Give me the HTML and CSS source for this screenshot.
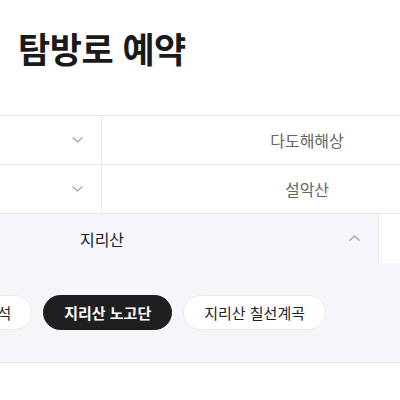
FILE: index.html
```html
<!DOCTYPE html>
<html lang="ko">
<head>
  <meta charset="UTF-8">
  <title>탐방로 예약</title>
  <link rel="stylesheet" href="styles.css">
</head>
<body>
  <h1 class="title">탐방로 예약</h1>

  <div class="board">
    <div class="row">
      <div class="cell cell-half">
        <svg class="chevron" width="11" height="6" viewBox="0 0 11 6"><path d="M0.5 0.5 L5.5 5 L10.5 0.5" /></svg>
      </div>
      <div class="cell cell-wide">
        <span class="cell-name">다도해해상</span>
      </div>
    </div>

    <div class="row">
      <div class="cell cell-half">
        <svg class="chevron" width="11" height="6" viewBox="0 0 11 6"><path d="M0.5 0.5 L5.5 5 L10.5 0.5" /></svg>
      </div>
      <div class="cell cell-wide">
        <span class="cell-name">설악산</span>
      </div>
    </div>

    <div class="row row-open">
      <div class="cell cell-open">
        <span class="cell-name">지리산</span>
        <svg class="chevron" width="11" height="6" viewBox="0 0 11 6"><path d="M0.5 5.5 L5.5 1 L10.5 5.5" /></svg>
      </div>
      <div class="cell cell-blank"></div>
    </div>

    <div class="panel">
      <div class="chips">
        <button class="chip">지리산 세석</button>
        <button class="chip chip-on">지리산 노고단</button>
        <button class="chip">지리산 칠선계곡</button>
      </div>
    </div>
  </div>
</body>
</html>
```

FILE: styles.css
```css
body {
  margin: 0;
  overflow: hidden;
  font-family: "Noto Sans CJK KR", "Noto Sans", sans-serif;
  background-color: #fff;
  color: #222;
}
.title {
  margin: 0 0 43px;
  padding: 24px 0 0 18px;
  font-size: 35px;
  line-height: 48px;
  font-weight: 700;
  color: #1a1a1a;
  letter-spacing: -0.5px;
}
.board {
  margin-left: -174px;
  width: 1000px;
  border-top: 1px solid #e8e8e8;
}
.row {
  display: flex;
  height: 48px;
  border-bottom: 1px solid #e8e8e8;
}
.cell {
  position: relative;
  display: flex;
  align-items: center;
  justify-content: center;
  box-sizing: border-box;
  font-size: 16px;
  color: #666;
}
.cell-half {
  width: 276px;
  border-right: 1px solid #e8e8e8;
}
.cell-wide {
  width: 410px;
}
.cell-open {
  width: 552px;
  background-color: #f4f6f9;
  color: #222;
}
.cell-blank {
  flex: 1;
  border-left: 1px solid #e8e8e8;
}
.row-open {
  height: 49px;
  border-bottom: none;
}
.chevron {
  position: absolute;
  right: 18px;
  top: 21px;
  fill: none;
  stroke: #9aa5b5;
  stroke-width: 1.3;
}
.panel {
  display: flex;
  align-items: center;
  height: 99px;
  background-color: #f4f6f9;
  border-bottom: 1px solid #e8e8e8;
}
.chips {
  display: flex;
  gap: 11px;
  margin-left: 91px;
}
.chip {
  height: 35px;
  padding: 0 20px;
  border: 1px solid #ececec;
  border-radius: 18px;
  background-color: #fff;
  font-family: inherit;
  font-size: 15px;
  color: #222;
  cursor: pointer;
}
.chip-on {
  background-color: #1e1f21;
  border-color: #1e1f21;
  color: #fff;
  font-weight: 700;
}
```
